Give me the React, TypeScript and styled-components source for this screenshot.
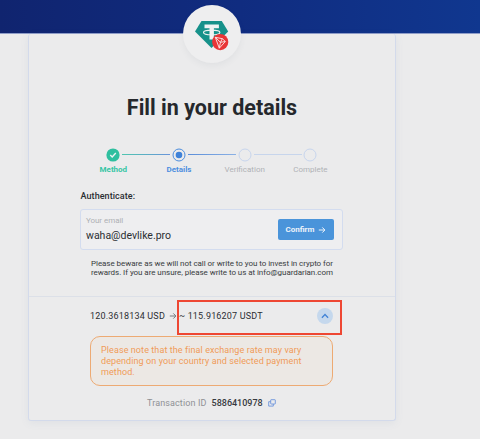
import React from 'react';
import styled, { createGlobalStyle } from 'styled-components';

const GlobalStyle = createGlobalStyle`
  * { box-sizing: border-box; }
  html, body { margin: 0; padding: 0; background: #ebebec; }
  body { font-family: Roboto, "Liberation Sans", sans-serif; color: #2b2e33; overflow: hidden; }
`;

const Page = styled.main`
  height: 439px;
  overflow: hidden;
  background: #ebebec;
`;

const Banner = styled.header`
  height: 34px;
  background: linear-gradient(90deg, #10246f 0%, #102c80 50%, #10378f 100%);
  border-bottom: 1px solid #8f9dc8;
`;

const Card = styled.section`
  position: relative;
  display: flex;
  flex-direction: column;
  width: 368px;
  height: 387px;
  margin-left: 28px;
  border: 1px solid #d3daeb;
  border-top: 0;
  border-radius: 3px;
  background: #ebebec;
  box-shadow: 0 2px 9px rgba(90, 110, 150, 0.08);
`;

const Coin = styled.div`
  position: absolute;
  top: -29px;
  left: 154px;
  width: 58px;
  height: 58px;
  border-radius: 50%;
  background: #eeeeef;
  box-shadow: 0 3px 6px rgba(70, 80, 100, 0.06);
  svg { display: block; }
`;

const Title = styled.h1`
  margin: 60px 0 0;
  height: 28px;
  line-height: 28px;
  text-align: center;
  font-size: 21.5px;
  font-weight: 700;
  color: #25282c;
`;

const Steps = styled.ol`
  display: grid;
  grid-template-columns: repeat(4, 65.7px);
  margin: 25.5px 0 0 51.5px;
  padding: 0;
  list-style: none;
`;

type StepState = 'done' | 'active' | 'todo';
const stepColor = { done: '#36c5a4', active: '#4f8fdf', todo: '#b0b2b6' };

const Step = styled.li<{ $state: StepState }>`
  display: flex;
  flex-direction: column;
  align-items: center;
  position: relative;
  font-size: 8px;
  line-height: 10px;
  font-weight: ${p => (p.$state === 'todo' ? 400 : 700)};
  color: ${p => stepColor[p.$state]};
  svg { display: block; margin-bottom: 3.5px; }
`;

const Connector = styled.span<{ $tone: string }>`
  position: absolute;
  left: calc(50% + 9px);
  top: 6px;
  width: 48px;
  height: 1px;
  background: ${p => p.$tone};
`;

const SectionLabel = styled.h2`
  margin: 15px 0 0 51.5px;
  font-size: 9px;
  line-height: 12px;
  font-weight: 500;
  letter-spacing: 0.07px;
`;

const EmailField = styled.div`
  display: flex;
  justify-content: space-between;
  align-items: center;
  width: 263px;
  height: 41px;
  margin: 7px 0 0 51px;
  padding: 0 8.5px 0 5px;
  border: 1px solid #d3dcef;
  border-radius: 3px;
  background: #eeeef0;
`;

const FieldText = styled.div`
  display: flex;
  flex-direction: column;
`;

const Caption = styled.span`
  font-size: 8px;
  line-height: 10px;
  letter-spacing: -0.05px;
  color: #afb1b5;
`;

const Value = styled.span`
  margin-top: 2px;
  font-size: 10.5px;
  line-height: 15px;
`;

const Confirm = styled.button`
  display: flex;
  align-items: center;
  gap: 4px;
  width: 56px;
  height: 21px;
  padding: 0 8px;
  border: 0;
  border-radius: 2px;
  background: #4a94da;
  color: #edf3fa;
  font: 700 8px/10px Roboto, sans-serif;
  white-space: nowrap;
  svg { flex: none; }
`;

const Warning = styled.p`
  margin: 8.5px 0 0 62px;
  font-size: 8px;
  line-height: 9px;
  letter-spacing: -0.055px;
  white-space: nowrap;
  color: #383b40;
`;

const Summary = styled.footer`
  margin-top: 19px;
  border-top: 1px solid #dce0e8;
  padding-left: 61px;
`;

const Exchange = styled.div`
  display: flex;
  align-items: center;
  height: 39px;
  width: 243px;
  font-size: 9px;
  letter-spacing: 0.18px;
  white-space: nowrap;
`;

const Amount = styled.span<{ $width: number }>`
  width: ${p => p.$width}px;
`;

const Toggle = styled.span`
  display: flex;
  align-items: center;
  justify-content: center;
  width: 16px;
  height: 16px;
  margin-left: auto;
  border-radius: 50%;
  background: #c5d8ed;
`;

const Notice = styled.p`
  width: 243px;
  height: 50px;
  margin: 0;
  padding: 8px 10px;
  border: 1px solid #edaa73;
  border-radius: 10px;
  background: #ece8e4;
  color: #f09b58;
  font-size: 9px;
  line-height: 11px;
  letter-spacing: 0.09px;
  white-space: nowrap;
`;

const Transaction = styled.div`
  display: flex;
  align-items: center;
  height: 12px;
  margin: 11px 0 0 57px;
  font-size: 9px;
  letter-spacing: 0.12px;
  color: #8f9195;
  white-space: nowrap;
  strong { font-weight: 500; letter-spacing: 0; color: #36393e; margin: 0 5px; }
`;

const Highlight = styled.div`
  position: absolute;
  left: 147.5px;
  top: 266px;
  width: 165px;
  height: 35px;
  border: 2px solid #ee4733;
  pointer-events: none;
`;

const CoinIcon = () => (
  <svg width="58" height="58" viewBox="0 0 58 58" fill="none">
    <path d="M18.5 16h20.3l6.4 10.5L28.5 43 12 26.5z" fill="#16918a" />
    <path d="M21.5 19.5h14.4v3.7h-5v11.2h-4.4V23.2h-5z" fill="#f0f3f3" />
    <ellipse cx="28.7" cy="27.4" rx="8.2" ry="2.3" stroke="#f0f3f3" strokeWidth="1.1" />
    <circle cx="37.2" cy="37.1" r="8.1" fill="#e83536" />
    <path d="M32.3 32.3l7.1 1.4 2.9 2.8-6 6.7zM32.3 32.3l5.1 5 4.9-.8M39.4 33.7l-2 3.6-1.1 5.9" stroke="#fae9e8" strokeWidth=".9" strokeLinejoin="round" />
  </svg>
);

const StepIcon = ({ state }: { state: StepState }) => (
  <svg width="14" height="14" viewBox="0 0 14 14" fill="none">
    {state === 'done' && <>
      <circle cx="7" cy="7" r="6.6" fill="#2fbf9f" />
      <path d="M4.3 7l1.9 1.9 3.6-3.8" stroke="#f0f4f4" strokeWidth="1.4" />
    </>}
    {state === 'active' && <>
      <circle cx="7" cy="7" r="6" stroke="#4c8ddd" />
      <circle cx="7" cy="7" r="3.3" fill="#3f82d8" />
    </>}
    {state === 'todo' && <circle cx="7" cy="7" r="6" stroke="#c7d5ec" />}
  </svg>
);

const Arrow = ({ color, size }: { color: string; size: number }) => (
  <svg width={size} height={size} viewBox="0 0 8 8" fill="none">
    <path d="M.8 4h6M4.3 1.4L6.9 4 4.3 6.6" stroke={color} strokeWidth="1" />
  </svg>
);

const steps: { label: string; state: StepState; line?: string }[] = [
  { label: 'Method', state: 'done', line: 'linear-gradient(90deg, #4fc6b0, #6a94da)' },
  { label: 'Details', state: 'active', line: 'linear-gradient(90deg, #5b8ed9, #8bb1e5)' },
  { label: 'Verification', state: 'todo', line: '#c7d5ec' },
  { label: 'Complete', state: 'todo' },
];

export default function App() {
  return (
    <Page>
      <GlobalStyle />
      <Banner />
      <Card>
        <Coin><CoinIcon /></Coin>
        <Title>Fill in your details</Title>
        <Steps>
          {steps.map(s => (
            <Step key={s.label} $state={s.state}>
              <StepIcon state={s.state} />
              {s.label}
              {s.line && <Connector $tone={s.line} />}
            </Step>
          ))}
        </Steps>
        <SectionLabel>Authenticate:</SectionLabel>
        <EmailField>
          <FieldText>
            <Caption>Your email</Caption>
            <Value>waha@devlike.pro</Value>
          </FieldText>
          <Confirm>Confirm <Arrow color="#edf3fa" size={8} /></Confirm>
        </EmailField>
        <Warning>
          Please beware as we will not call or write to you to invest in crypto for<br />
          rewards. If you are unsure, please write to us at info@guardarian.com
        </Warning>
        <Summary>
          <Exchange>
            <Amount $width={78.5}>120.3618134 USD</Amount>
            <Arrow color="#777a7f" size={8} />
            <Amount $width={100}>&nbsp;~ 115.916207 USDT</Amount>
            <Toggle>
              <svg width="8" height="6" viewBox="0 0 8 6" fill="none">
                <path d="M.9 4.7L4 1.5l3.1 3.2" stroke="#4283d6" strokeWidth="1.3" />
              </svg>
            </Toggle>
          </Exchange>
          <Notice>
            Please note that the final exchange rate may vary<br />
            depending on your country and selected payment<br />
            method.
          </Notice>
          <Transaction>
            Transaction ID <strong>5886410978</strong>
            <svg width="8" height="8" viewBox="0 0 8 8" fill="none" stroke="#6d94dd" strokeWidth=".9">
              <rect x="2.7" y=".7" width="4.6" height="4.3" rx=".4" />
              <path d="M2.7 2.7H.7v4.4h4.6V5" />
            </svg>
          </Transaction>
        </Summary>
        <Highlight />
      </Card>
    </Page>
  );
}
